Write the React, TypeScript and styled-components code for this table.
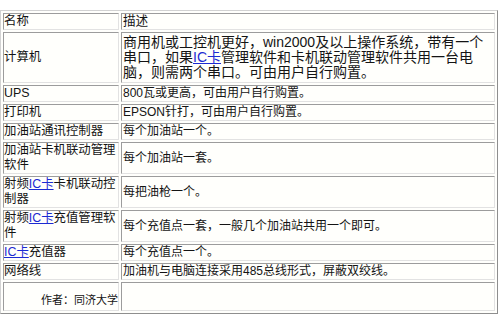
import React from 'react';
import styled, { createGlobalStyle } from 'styled-components';

const GlobalStyle = createGlobalStyle`
    html, body {
        margin: 0;
        padding: 0;
        background: #ffffff;
    }
    body {
        font-family: "Liberation Sans", "Noto Sans CJK SC", sans-serif;
        color: #141414;
    }
`;

const Page = styled.div`
    padding-top: 10px;
    width: 500px;
`;

const Table = styled.table`
    width: 498px;
    table-layout: fixed;
    border-collapse: separate;
    border-spacing: 2px;
    border: 1px solid;
    border-color: #d2d2d2 #8e8e8e #8e8e8e #d2d2d2;
    background: #fffffc;
`;

const Row = styled.tr<{ $h: number }>`
    height: ${p => p.$h}px;
`;

const NameCell = styled.td<{ $author?: boolean }>`
    width: 114px;
    padding: ${p => (p.$author ? '0 0 2px 0' : '0')};
    border: 1px solid;
    border-color: #9c9c9c #e2e2e2 #e2e2e2 #9c9c9c;
    font-size: ${p => (p.$author ? 11 : 12.4)}px;
    line-height: 15px;
    text-align: ${p => (p.$author ? 'right' : 'left')};
    vertical-align: ${p => (p.$author ? 'bottom' : 'middle')};
`;

const DescCell = styled.td<{ $size?: number; $big?: boolean }>`
    padding: ${p => (p.$big ? '2px 8px 2px 1px' : '0 2px 0 1px')};
    border: 1px solid;
    border-color: #9c9c9c #e2e2e2 #e2e2e2 #9c9c9c;
    font-size: ${p => p.$size ?? 12}px;
    line-height: 15px;
    vertical-align: middle;
`;

const Link = styled.a`
    color: #1c2ad2;
    text-decoration: underline;
`;

const IC = () => <Link href="#">IC卡</Link>;

const App: React.FC = () => {
    return (
        <Page>
            <GlobalStyle />
            <Table>
                <tbody>
                    <Row $h={17}>
                        <NameCell>名称</NameCell>
                        <DescCell $size={12.6}>描述</DescCell>
                    </Row>
                    <Row $h={50}>
                        <NameCell>计算机</NameCell>
                        <DescCell $size={14} $big>
                            商用机或工控机更好，win2000及以上操作系统，带有一个串口，如果<IC />管理软件和卡机联动管理软件共用一台电脑，则需两个串口。可由用户自行购置。
                        </DescCell>
                    </Row>
                    <Row $h={16}>
                        <NameCell>UPS</NameCell>
                        <DescCell>800瓦或更高，可由用户自行购置。</DescCell>
                    </Row>
                    <Row $h={16}>
                        <NameCell>打印机</NameCell>
                        <DescCell>EPSON针打，可由用户自行购置。</DescCell>
                    </Row>
                    <Row $h={16}>
                        <NameCell>加油站通讯控制器</NameCell>
                        <DescCell>每个加油站一个。</DescCell>
                    </Row>
                    <Row $h={32}>
                        <NameCell>加油站卡机联动管理软件</NameCell>
                        <DescCell>每个加油站一套。</DescCell>
                    </Row>
                    <Row $h={32}>
                        <NameCell>射频<IC />卡机联动控制器</NameCell>
                        <DescCell>每把油枪一个。</DescCell>
                    </Row>
                    <Row $h={32}>
                        <NameCell>射频<IC />充值管理软件</NameCell>
                        <DescCell>每个充值点一套，一般几个加油站共用一个即可。</DescCell>
                    </Row>
                    <Row $h={16}>
                        <NameCell><IC />充值器</NameCell>
                        <DescCell>每个充值点一个。</DescCell>
                    </Row>
                    <Row $h={16}>
                        <NameCell>网络线</NameCell>
                        <DescCell>加油机与电脑连接采用485总线形式，屏蔽双绞线。</DescCell>
                    </Row>
                    <Row $h={29}>
                        <NameCell $author>作者：同济大学</NameCell>
                        <DescCell />
                    </Row>
                </tbody>
            </Table>
        </Page>
    );
};

export default App;
